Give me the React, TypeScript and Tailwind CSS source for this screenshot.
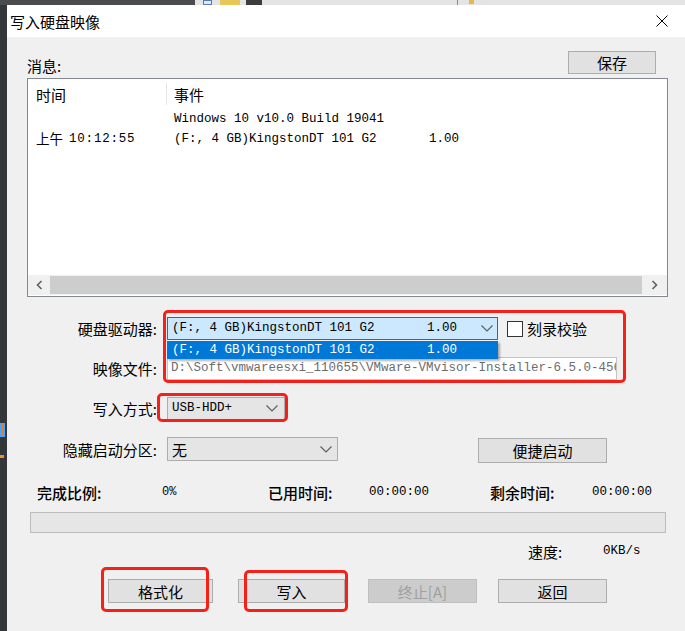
import React from "react";

const ui = "font-['Noto_Sans_CJK_SC','Noto_Sans',sans-serif]";
const mono = "font-['Liberation_Mono','Noto_Sans_CJK_SC',monospace]";

function Chevron() {
  return (
    <svg width="12" height="7" viewBox="0 0 12 7" className="shrink-0">
      <path d="M0.5 0.5 L6 6 L11.5 0.5" fill="none" stroke="#5a5a5a" strokeWidth="1.1" />
    </svg>
  );
}

function Btn({ children, className = "", disabled = false }: { children: React.ReactNode; className?: string; disabled?: boolean }) {
  return (
    <div
      className={`${ui} flex items-center justify-center border text-[15px] leading-none ${
        disabled ? "bg-[#cccccc] border-[#bfbfbf] text-[#a0a0a0]" : "bg-[#e1e1e1] border-[#adadad] text-black"
      } ${className}`}
    >
      {children}
    </div>
  );
}

function Label({ children }: { children: React.ReactNode }) {
  return <div className={`${ui} w-[150px] shrink-0 text-right text-[15px] leading-none text-black`}>{children}</div>;
}

export default function App() {
  return (
    <div className="relative flex h-[631px] w-[685px] flex-col overflow-hidden bg-[#35383a]">
      {/* background window strip */}
      <div className="flex h-[5px] shrink-0">
        <div className="w-[195px] bg-[#4a4c4e]" />
        <div className="relative flex flex-1 bg-[#e4e4e4]">
          <div className="ml-[8px] h-[5px] w-[9px] border border-[#5a7bb0] bg-[#dfe8f5]" />
          <div className="ml-[8px] h-[5px] w-[20px] bg-[#e8c65a]" />
          <div className="ml-[6px] h-[5px] w-[16px] bg-[#3c3c3c]" />
          <div className="ml-[195px] h-[5px] w-[1px] bg-[#8a8a8a]" />
          <div className="ml-[11px] h-[4px] w-[5px] bg-[#e8b84a]" />
        </div>
      </div>
      <div className="flex flex-1">
        {/* left desktop strip */}
        <div className="relative w-[7px] shrink-0 bg-[#34373a]">
          <div className="mt-[418px] h-[14px] w-[5px] border border-[#4aa3ff] bg-[#d9822b]" />
          <div className="mt-[18px] h-[3px] w-[4px] bg-[#e8912d]" />
        </div>
        {/* dialog */}
        <div className="flex flex-1 flex-col">
          <div className="flex h-[32px] shrink-0 items-center bg-white pl-[3px]">
            <div className={`${ui} text-[15px] leading-none text-black`}>写入硬盘映像</div>
            <svg width="12" height="12" viewBox="0 0 12 12" className="ml-auto mr-[17px]">
              <path d="M0.5 0.5 L11.5 11.5 M11.5 0.5 L0.5 11.5" stroke="#000" strokeWidth="1" />
            </svg>
          </div>
          <div className="relative flex flex-1 flex-col bg-[#f0f0f0]">
            {/* 消息 row */}
            <div className="mt-[14px] flex h-[23px] items-center">
              <div className={`${ui} ml-[20px] mt-[5px] text-[15px] leading-none text-black`}>消息:</div>
              <Btn className="ml-auto mr-[29px] h-[23px] w-[88px]">保存</Btn>
            </div>
            {/* list view */}
            <div className="ml-[20px] mt-[4px] flex h-[219px] w-[641px] flex-col border border-[#828790] bg-white">
              <div className="flex h-[30px] shrink-0 items-center">
                <div className={`${ui} w-[138px] pl-[8px] text-[15px] leading-none`}>时间</div>
                <div className="h-[22px] w-[1px] bg-[#e5e5e5]" />
                <div className={`${ui} pl-[7px] text-[15px] leading-none`}>事件</div>
              </div>
              <div className={`${mono} flex h-[20px] items-center whitespace-pre text-[12.5px] leading-none text-black`}>
                <div className="w-[139px]" />
                <div className="pl-[7px]">Windows 10 v10.0 Build 19041</div>
              </div>
              <div className={`${mono} flex h-[20px] items-center whitespace-pre text-[12.5px] leading-none text-black`}>
                <div className="flex w-[139px] items-center pl-[8px]">
                  <span className={`${ui} text-[13.5px]`}>上午</span>
                  <span className="ml-[6px] tracking-[0.8px]">10:12:55</span>
                </div>
                <div className="pl-[7px]">{"(F:, 4 GB)KingstonDT 101 G2       1.00"}</div>
              </div>
              <div className="flex-1" />
              <div className="mb-[1px] flex h-[20px] shrink-0 bg-[#f0f0f0]">
                <div className="flex w-[22px] items-center justify-center">
                  <svg width="7" height="10" viewBox="0 0 7 10">
                    <path d="M5.5 1 L1.5 5 L5.5 9" fill="none" stroke="#606060" strokeWidth="1.6" />
                  </svg>
                </div>
                <div className="my-[1px] flex-1 bg-[#cdcdcd]" />
                <div className="flex w-[25px] items-center justify-center">
                  <svg width="7" height="10" viewBox="0 0 7 10">
                    <path d="M1.5 1 L5.5 5 L1.5 9" fill="none" stroke="#606060" strokeWidth="1.6" />
                  </svg>
                </div>
              </div>
            </div>
            {/* drive row */}
            <div className="mt-[20px] flex h-[23px] items-center">
              <Label>硬盘驱动器:</Label>
              <div className={`${mono} ml-[10px] flex h-[23px] w-[331px] items-center whitespace-pre border border-[#0078d7] bg-[#cce8ff] pl-[4px] pr-[4px] text-[12.5px] leading-none text-black`}>
                <span>{"(F:, 4 GB)KingstonDT 101 G2       1.00"}</span>
                <span className="ml-auto">
                  <Chevron />
                </span>
              </div>
              <div className="ml-[9px] h-[16px] w-[16px] border border-[#333333] bg-white" />
              <div className={`${ui} ml-[4px] text-[15px] leading-none text-black`}>刻录校验</div>
            </div>
            {/* image file row */}
            <div className="mt-[17px] flex h-[23px] items-center">
              <Label>映像文件:</Label>
              <div className={`${mono} ml-[10px] flex h-[23px] w-[450px] items-center overflow-hidden whitespace-pre border border-[#c4c4c4] bg-white pl-[3px] text-[12.5px] leading-none text-[#6d6d6d]`}>
                {"D:\\Soft\\vmwareesxi_110655\\VMware-VMvisor-Installer-6.5.0-4564106.x86_64.iso"}
              </div>
            </div>
            {/* write mode row */}
            <div className="mt-[17px] flex h-[23px] items-center">
              <Label>写入方式:</Label>
              <div className={`${mono} ml-[10px] flex h-[23px] w-[118px] items-center whitespace-pre border border-[#adadad] bg-[#e5e5e5] pl-[4px] pr-[6px] text-[12.5px] leading-none text-black`}>
                <span>USB-HDD+</span>
                <span className="ml-auto">
                  <Chevron />
                </span>
              </div>
            </div>
            {/* hidden partition row */}
            <div className="mt-[17px] flex h-[24px] items-start">
              <div className="flex h-[24px] items-center">
                <Label>隐藏启动分区:</Label>
              </div>
              <div className={`${ui} ml-[10px] flex h-[24px] w-[171px] items-center border border-[#adadad] bg-[#e5e5e5] pl-[4px] pr-[5px] text-[15px] leading-none text-black`}>
                <span>无</span>
                <span className="ml-auto">
                  <Chevron />
                </span>
              </div>
              <Btn className="ml-[140px] mt-[1px] h-[25px] w-[129px]">便捷启动</Btn>
            </div>
            {/* status row */}
            <div className="mt-[22px] flex h-[18px] items-center pl-[30px] text-black">
              <div className={`${ui} w-[125px] text-[15px] font-medium leading-none`}>完成比例:</div>
              <div className={`${mono} w-[106px] text-[12px] leading-none`}>0%</div>
              <div className={`${ui} w-[101px] text-[15px] font-medium leading-none`}>已用时间:</div>
              <div className={`${mono} w-[121px] text-[12.5px] leading-none`}>00:00:00</div>
              <div className={`${ui} w-[102px] text-[15px] font-medium leading-none`}>剩余时间:</div>
              <div className={`${mono} text-[12.5px] leading-none`}>00:00:00</div>
            </div>
            {/* progress */}
            <div className="ml-[23px] mt-[11px] h-[21px] w-[636px] border border-[#bcbcbc] bg-[#e6e6e6]" />
            {/* speed */}
            <div className="mt-[9px] flex h-[18px] items-center pl-[521px] text-black">
              <div className={`${ui} w-[75px] text-[15px] leading-none`}>速度:</div>
              <div className={`${mono} text-[12.5px] leading-none`}>0KB/s</div>
            </div>
            {/* buttons */}
            <div className="mt-[19px] flex h-[24px]">
              <Btn className="ml-[101px] h-[24px] w-[105px]">格式化</Btn>
              <Btn className="ml-[25px] h-[24px] w-[107px]">写入</Btn>
              <Btn disabled className="ml-[23px] h-[24px] w-[109px]">
                终止[A]
              </Btn>
              <Btn className="ml-[21px] h-[24px] w-[109px]">返回</Btn>
            </div>

            {/* dropdown overlay */}
            <div
              className={`${mono} absolute left-[160px] top-[304px] flex h-[18px] w-[331px] items-center whitespace-pre bg-[#0078d7] pl-[5px] text-[12.5px] leading-none text-white shadow-[2px_2px_2px_rgba(0,0,0,0.3)]`}
            >
              {"(F:, 4 GB)KingstonDT 101 G2       1.00"}
            </div>

            {/* red annotation boxes */}
            <div className="pointer-events-none absolute left-[156px] top-[273px] h-[73px] w-[463px] rounded-[5px] border-[3px] border-[#f5201a]" />
            <div className="pointer-events-none absolute left-[150px] top-[356px] h-[29px] w-[131px] rounded-[5px] border-[3px] border-[#f5201a]" />
            <div className="pointer-events-none absolute left-[94px] top-[530px] h-[45px] w-[108px] rounded-[5px] border-[3px] border-[#f5201a]" />
            <div className="pointer-events-none absolute left-[237px] top-[533px] h-[42px] w-[104px] rounded-[5px] border-[3px] border-[#f5201a]" />
          </div>
        </div>
      </div>
    </div>
  );
}
